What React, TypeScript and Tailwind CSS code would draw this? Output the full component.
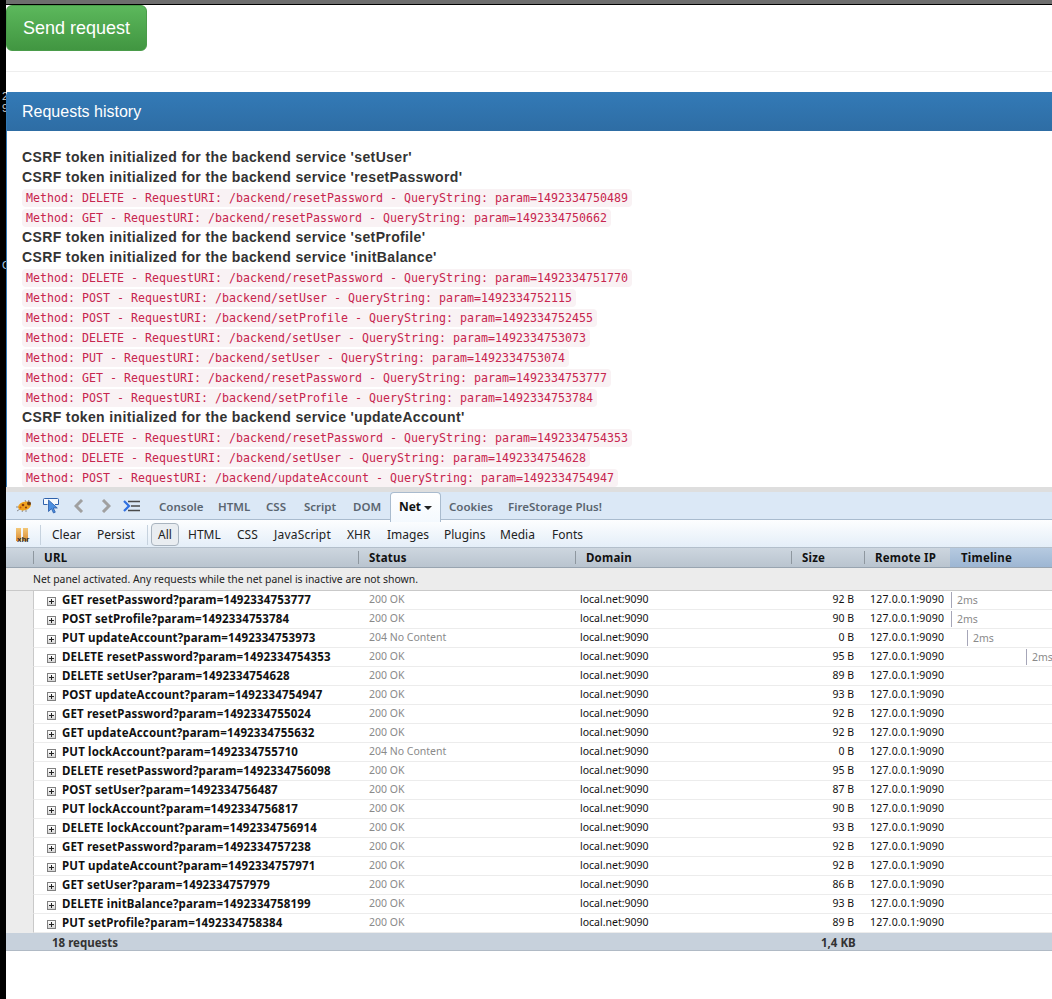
const history: [string, string?, string?, string?][] = [
  ["CSRF", "setUser"],
  ["CSRF", "resetPassword"],
  ["DELETE", "resetPassword", "1492334750489"],
  ["GET", "resetPassword", "1492334750662"],
  ["CSRF", "setProfile"],
  ["CSRF", "initBalance"],
  ["DELETE", "resetPassword", "1492334751770"],
  ["POST", "setUser", "1492334752115"],
  ["POST", "setProfile", "1492334752455"],
  ["DELETE", "setUser", "1492334753073"],
  ["PUT", "setUser", "1492334753074"],
  ["GET", "resetPassword", "1492334753777"],
  ["POST", "setProfile", "1492334753784"],
  ["CSRF", "updateAccount"],
  ["DELETE", "resetPassword", "1492334754353"],
  ["DELETE", "setUser", "1492334754628"],
  ["POST", "updateAccount", "1492334754947"],
];

type Row = { url: string; size: string; empty?: boolean; bar?: number };

const rows: Row[] = [
  { url: "GET resetPassword?param=1492334753777", size: "92 B", bar: 0 },
  { url: "POST setProfile?param=1492334753784", size: "90 B", bar: 0 },
  { url: "PUT updateAccount?param=1492334753973", size: "0 B", empty: true, bar: 16 },
  { url: "DELETE resetPassword?param=1492334754353", size: "95 B", bar: 75 },
  { url: "DELETE setUser?param=1492334754628", size: "89 B" },
  { url: "POST updateAccount?param=1492334754947", size: "93 B" },
  { url: "GET resetPassword?param=1492334755024", size: "92 B" },
  { url: "GET updateAccount?param=1492334755632", size: "92 B" },
  { url: "PUT lockAccount?param=1492334755710", size: "0 B", empty: true },
  { url: "DELETE resetPassword?param=1492334756098", size: "95 B" },
  { url: "POST setUser?param=1492334756487", size: "87 B" },
  { url: "PUT lockAccount?param=1492334756817", size: "90 B" },
  { url: "DELETE lockAccount?param=1492334756914", size: "93 B" },
  { url: "GET resetPassword?param=1492334757238", size: "92 B" },
  { url: "PUT updateAccount?param=1492334757971", size: "92 B" },
  { url: "GET setUser?param=1492334757979", size: "86 B" },
  { url: "DELETE initBalance?param=1492334758199", size: "93 B" },
  { url: "PUT setProfile?param=1492334758384", size: "89 B" },
];

const uiFont = "font-['Noto_Sans','Open_Sans',sans-serif]";

function BugIcon() {
  return (
    <svg width="18" height="14" viewBox="0 0 18 14">
      <path d="M1 8h3M2 12l3-2M7 13l1-2M11 13l0-2M10 1l1 2M14 1l-1 2" stroke="#8c8c8c" strokeWidth="1" fill="none" />
      <ellipse cx="9.500" cy="7" rx="6.500" ry="4.300" fill="#f0a21e" transform="rotate(-18 9.500 7)" />
      <circle cx="14" cy="4.500" r="2" fill="#6b3d10" />
      <circle cx="8" cy="6" r="1.300" fill="#8a3f0c" />
      <circle cx="11" cy="8.500" r="1.100" fill="#8a3f0c" />
      <circle cx="5.500" cy="8.500" r="1" fill="#c9590f" />
    </svg>
  );
}

function InspectIcon() {
  return (
    <svg width="17" height="16" viewBox="0 0 17 16">
      <path d="M4.500 6.500H.5v-5a1 1 0 0 1 1-1h13a1 1 0 0 1 1 1v5H12" fill="#f6fafe" stroke="#2f62ad" />
      <path d="M5.500 2v11.500l3-2.800 2 4.300 1.800-.8-2-4.200h4z" fill="#4c8fe0" stroke="#2a5ca8" strokeWidth=".8" />
    </svg>
  );
}

function CommandIcon() {
  return (
    <svg width="17" height="12" viewBox="0 0 17 12">
      <path d="M1 1l5 5-5 5" stroke="#2f6fe0" strokeWidth="2.200" fill="none" />
      <path d="M5 1.500h12M8 6h9M5 10.500h12" stroke="#4a4a4a" strokeWidth="1.700" fill="none" />
    </svg>
  );
}

function Chevron({ flip }: { flip?: boolean }) {
  return (
    <svg width="10" height="14" viewBox="0 0 10 14">
      <path d={flip ? "M2 1l6 6-6 6" : "M8 1L2 7l6 6"} stroke="#a0a0a0" strokeWidth="3" fill="none" />
    </svg>
  );
}

function PauseIcon() {
  return (
    <div className="relative w-[14px] h-[14px]">
      <div className="absolute left-0 top-0 w-[5px] h-[13px] bg-gradient-to-b from-[#f3c878] to-[#d98a2a]" />
      <div className="absolute left-[7px] top-0 w-[5px] h-[13px] bg-gradient-to-b from-[#f3c878] to-[#d98a2a]" />
      <span className="absolute left-[1px] top-[7px] text-[8px] leading-[9px] font-bold text-[#333] font-['Liberation_Sans',sans-serif]">
        xhr
      </span>
    </div>
  );
}

function Plus() {
  return (
    <div className="w-[9px] h-[9px] mt-[3px] border border-[#7f7f7f] bg-gradient-to-b from-[#ffffff] to-[#d5d5d5] relative shrink-0">
      <div className="absolute left-[1px] top-[3px] w-[5px] h-px bg-[#222]" />
      <div className="absolute left-[3px] top-[1px] w-px h-[5px] bg-[#222]" />
    </div>
  );
}

function HistoryLine({ line }: { line: [string, string?, string?, string?] }) {
  if (line[0] === "CSRF") {
    return (
      <div className="h-5 leading-5 text-[14px] tracking-[0.37px] font-bold text-[#333]">
        CSRF token initialized for the backend service '{line[1]}'
      </div>
    );
  }
  return (
    <div className="h-5 leading-5">
      <code className="font-['DejaVu_Sans_Mono',monospace] text-[11.640px] text-[#c7254e] bg-[#f9f2f4] rounded px-[4px] py-[2px]">
        Method: {line[0]} - RequestURI: /backend/{line[1]} - QueryString: param={line[2]}
      </code>
    </div>
  );
}

function HeaderCell({ label, width, active }: { label: string; width: string; active?: boolean }) {
  return (
    <div className={`${width} h-full flex items-center relative pt-px ${active ? "pl-[11px] bg-gradient-to-b from-[#b6cae0] to-[#9db6d3]" : "pl-[11px]"}`}>
      {!active && <div className="absolute left-0 top-[3px] bottom-[3px] w-px bg-[#8e979f]" />}
      <span className="text-[11.500px] tracking-[0.2px] font-bold text-[#111]">{label}</span>
    </div>
  );
}

export default function App() {
  return (
    <div className="w-[1052px] h-[999px] overflow-hidden bg-white flex relative">
      <div className="w-[6px] shrink-0 bg-black relative overflow-hidden font-['Liberation_Sans',sans-serif] text-[11px] leading-[13px]">
        <span className="absolute left-[2px] top-[90px] text-[#ccc]">2</span>
        <span className="absolute left-[2px] top-[102px] text-[#ccc]">9</span>
        <span className="absolute left-[2px] top-[259px] text-[#a9cbe8]">C</span>
      </div>
      <div className="flex-1 min-w-0 flex flex-col">
        {/* app page */}
        <div className="h-[487px] overflow-hidden font-['Liberation_Sans',sans-serif] relative">
          <div className="absolute left-0 right-0 top-0 h-[5px] bg-[#6e6e6e] border-b border-black" />
          <div className="pt-[5px]">
            <button className="w-[141px] h-[46px] pt-px rounded-md text-[18px] text-white border border-[#4a9c4a] bg-gradient-to-b from-[#5cb85c] to-[#419641]">
              Send request
            </button>
          </div>
          <div className="mt-[20px] h-px bg-[#eee]" />
          <div className="mt-[20px] border-l border-[#337ab7] rounded-tl">
            <div className="h-[39px] pl-[15px] flex items-center text-[16px] text-white bg-gradient-to-b from-[#337ab7] to-[#2e6da4]">
              Requests history
            </div>
            <div className="pt-[16px] pl-[15px]">
              {history.map((line, i) => (
                <HistoryLine key={i} line={line} />
              ))}
            </div>
          </div>
        </div>

        {/* devtools panel */}
        <div className={`${uiFont} border-t-[5px] border-[#dedede]`}>
          <div className="h-[28px] flex items-center bg-[#dbe8f6] border-b border-[#a9bbce] relative">
            <div className="w-[9px] shrink-0" />
            <BugIcon />
            <div className="w-[10px] shrink-0" />
            <InspectIcon />
            <div className="w-[14px] shrink-0" />
            <Chevron />
            <div className="w-[17px] shrink-0" />
            <Chevron flip />
            <div className="w-[12px] shrink-0" />
            <CommandIcon />
            <div className="ml-[19px] pt-[2px] flex items-center text-[11.500px] font-semibold text-[#5a6570] h-full">
              <span className="w-[59px]">Console</span>
              <span className="w-[48px]">HTML</span>
              <span className="w-[38px]">CSS</span>
              <span className="w-[49px]">Script</span>
              <span className="w-[37px]">DOM</span>
              <div className="w-[51px] h-[30px] bg-gradient-to-b from-[#ffffff] to-[#f4f9fe] border border-b-0 border-[#a9bbce] rounded-t flex items-center justify-center gap-[3px] text-[#111] text-[12px] font-bold">
                Net
                <div className="mt-[1px] border-x-[4px] border-x-transparent border-t-[4px] border-t-[#222]" />
              </div>
              <span className="ml-[8px] w-[59px]">Cookies</span>
              <span>FireStorage Plus!</span>
            </div>
          </div>
          <div className="h-[28px] pt-[2px] flex items-center bg-gradient-to-b from-[#fdfeff] to-[#e4eef8] border-b border-[#b3bfcb] text-[12px] text-[#222]">
            <div className="ml-[10px]">
              <PauseIcon />
            </div>
            <div className="ml-[10px] w-px h-[20px] bg-[#c6d2de]" />
            <span className="ml-[11px] w-[45px]">Clear</span>
            <span className="w-[50px]">Persist</span>
            <div className="w-px h-[20px] bg-[#c6d2de]" />
            <div className="ml-[3px] w-[28px] h-[23px] border border-[#a9b4bf] rounded-sm bg-[#e9edf1] flex items-center justify-center">All</div>
            <span className="ml-[9px] w-[49px]">HTML</span>
            <span className="w-[37px]">CSS</span>
            <span className="w-[73px] tracking-[0.2px]">JavaScript</span>
            <span className="w-[40px]">XHR</span>
            <span className="w-[57px]">Images</span>
            <span className="w-[56px]">Plugins</span>
            <span className="w-[52px]">Media</span>
            <span>Fonts</span>
          </div>
          <div className="h-[20px] flex items-center bg-gradient-to-b from-[#cdd6df] to-[#b9c4cf] border-b border-[#98a4b0]">
            <div className="w-[27px] h-full shrink-0" />
            <HeaderCell label="URL" width="w-[325px]" />
            <HeaderCell label="Status" width="w-[217px]" />
            <HeaderCell label="Domain" width="w-[216px]" />
            <HeaderCell label="Size" width="w-[73px]" />
            <HeaderCell label="Remote IP" width="w-[86px]" />
            <HeaderCell label="Timeline" width="flex-1" active />
          </div>
          <div className="h-[23px] pt-px bg-[#ececec] border-b border-[#c9c9c9] flex items-center pl-[27px] text-[10.400px] text-[#222]">
            Net panel activated. Any requests while the net panel is inactive are not shown.
          </div>
          <div className="bg-[#ececec] pl-[27px]">
            {rows.map((row) => (
              <div key={row.url} className="h-[19px] bg-white border-l border-[#c9c9c9] border-b border-b-[#ececec] flex items-center text-[10.500px] text-[#111] whitespace-nowrap overflow-hidden">
                <div className="w-[13px] shrink-0" />
                <Plus />
                <div className="w-[6px] shrink-0" />
                <div className="w-[307px] shrink-0 font-bold text-[11.500px] tracking-[0.15px]">{row.url}</div>
                <div className="w-[211px] shrink-0 text-[#8a8a8a]">{row.empty ? "204 No Content" : "200 OK"}</div>
                <div className="w-[199px] shrink-0">local.net:9090</div>
                <div className="w-[75px] shrink-0 text-right">{row.size}</div>
                <div className="w-[16px] shrink-0" />
                <div className="w-[81px] shrink-0 tracking-[0.2px]">127.0.0.1:9090</div>
                {row.bar !== undefined && (
                  <div className="flex items-center h-full shrink-0" style={{ marginLeft: row.bar }}>
                    <div className="w-px h-[16px] bg-[#a6a6b8]" />
                    <span className="ml-[5px] text-[#8a8a8a] mt-[2px]">2ms</span>
                  </div>
                )}
              </div>
            ))}
          </div>
          <div className="h-[18px] pt-[2px] bg-[#c7d1dc] border-b border-[#b0bac5] flex items-center text-[11.500px] font-bold text-[#333]">
            <span className="ml-[46px] w-[769px]">18 requests</span>
            <span>1,4 KB</span>
          </div>
        </div>
      </div>
    </div>
  );
}
